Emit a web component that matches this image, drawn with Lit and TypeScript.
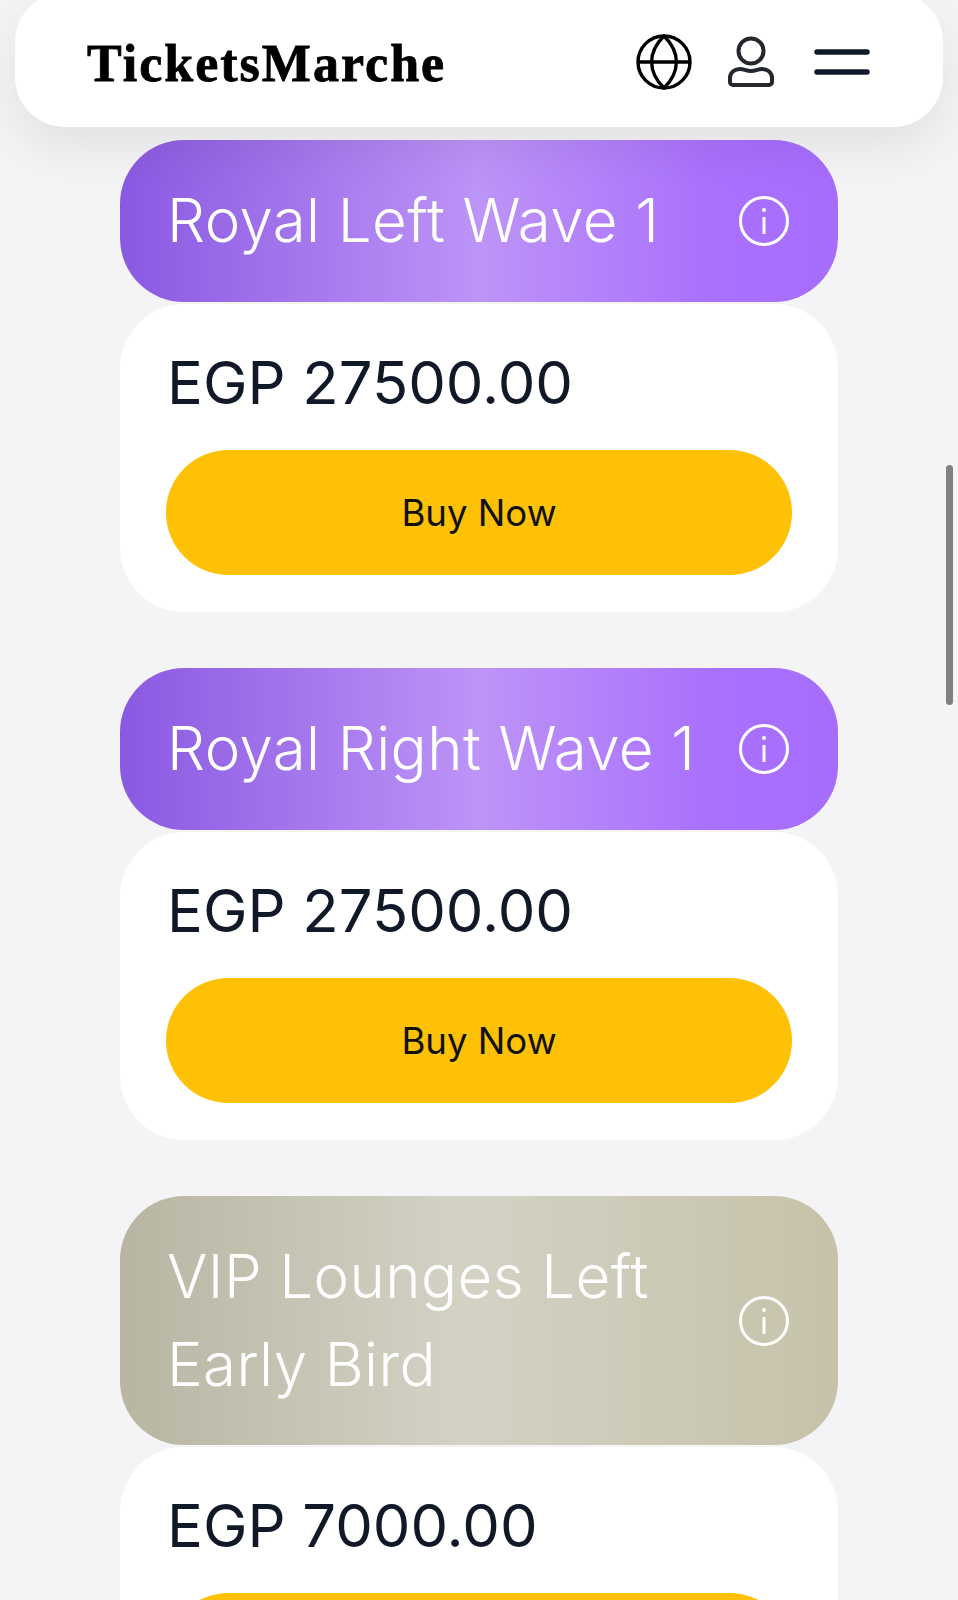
import { LitElement, html, css, svg } from "lit";
import { customElement } from "lit/decorators.js";

interface Ticket { name: string; price: string; tone: string; }
const tickets: Ticket[] = [
  { name: "Royal Left Wave 1", price: "EGP 27500.00", tone: "royal" },
  { name: "Royal Right Wave 1", price: "EGP 27500.00", tone: "royal" },
  { name: "VIP Lounges Left Early Bird", price: "EGP 7000.00", tone: "vip" },
];

@customElement("app-root")
export class AppRoot extends LitElement {
  static styles = css`
    :host { display: block; position: relative; height: 1600px; overflow: hidden; background: #f4f4f7; font-family: Inter, "Liberation Sans", sans-serif; }
    .nav { position: relative; z-index: 2; box-sizing: border-box; height: 135px; margin: -8px 15px 0; padding: 5px 73px 0; border-radius: 50px; background: #fff;
      box-shadow: 0 20px 50px rgba(0,0,0,.08); display: flex; align-items: center; justify-content: space-between; }
    .logo { margin: 2px 0 0 -1px; font-family: "Liberation Serif", serif; font-weight: 700; font-size: 52px; letter-spacing: 2px; color: #000; -webkit-text-stroke: .8px #000; }
    .icons { display: flex; align-items: center; }
    .icons svg { display: block; }
    .icons .user { margin: 0 40px 0 36px; }
    .list { padding: 13px 120px 0; display: flex; flex-direction: column; gap: 56px; }
    .head { box-sizing: border-box; min-height: 162px; padding: 0 49px 0 47px; border-radius: 64px; display: flex; align-items: center; justify-content: space-between; gap: 24px; color: #fff; font-weight: 320; font-size: 60px; letter-spacing: .4px; line-height: 88px; }
    .head span { display: block; margin-top: -2px; }
    .head.royal { background: linear-gradient(90deg, #8a59e2 0%, #bd94f7 50%, #aa71fd 82%, #a66cfc 100%); }
    .head.vip { background: linear-gradient(90deg, #b8b5a2 0%, #d3d2c5 48%, #c6c2a9 100%); padding-top: 1px; min-height: 249px; }
    .head svg { flex: none; }
    .body { box-sizing: border-box; margin-top: 2px; height: 308px; padding: 42px 46px 0; border-radius: 64px; background: #fff; }
    .price { margin-left: 1px; font-size: 59.7px; line-height: 72px; color: #111827; }
    .buy { display: flex; align-items: center; justify-content: center; width: 100%; height: 125px; margin-top: 32px; padding: 0; border: 0; border-radius: 63px; background: #fec105; color: #111; font-family: inherit; font-size: 36.6px; }
    .bar { position: absolute; right: 5px; top: 465px; width: 7px; height: 240px; border-radius: 4px; background: #808080; }
  `;

  private globe() {
    return html`<svg width="56" height="56" viewBox="0 0 56 56" fill="none" stroke="#000" stroke-width="3.4">
      <circle cx="28" cy="28" r="26"/><path d="M2 28h52"/><path d="M28 2c-16.500 16-16.500 36 0 52c16.500-16 16.500-36 0-52z"/></svg>`;
  }
  private user() {
    return html`<svg class="user" width="46" height="52" viewBox="0 0 46 52" fill="none" stroke="#24272e" stroke-width="4" stroke-linecap="round" stroke-linejoin="round">
      <circle cx="23" cy="15" r="12.500"/><path d="M5 49h36a3 3 0 0 0 3-3v-4c0-6-5-9-10-9c-4 0-6 2-11 2s-7-2-11-2c-5 0-10 3-10 9v4a3 3 0 0 0 3 3z"/></svg>`;
  }
  private menu() {
    return html`<svg width="56" height="26" viewBox="0 0 56 26" fill="none" stroke="#111827" stroke-width="5.500" stroke-linecap="round">
      <path d="M3 3h50M3 23h50"/></svg>`;
  }
  private info() {
    return svg`<svg width="50" height="50" viewBox="0 0 50 50" fill="none" stroke="#fff" stroke-width="3">
      <circle cx="25" cy="25" r="23.500"/><path d="M25 21v17"/><circle cx="25" cy="14" r="2" fill="#fff" stroke="none"/></svg>`;
  }

  render() {
    return html`
      <header class="nav">
        <div class="logo">TicketsMarche</div>
        <div class="icons">${this.globe()}${this.user()}${this.menu()}</div>
      </header>
      <main class="list">
        ${tickets.map(t => html`<section>
          <div class="head ${t.tone}"><span>${t.name}</span>${this.info()}</div>
          <div class="body"><div class="price">${t.price}</div><button class="buy">Buy Now</button></div>
        </section>`)}
      </main>
      <div class="bar"></div>`;
  }
}
